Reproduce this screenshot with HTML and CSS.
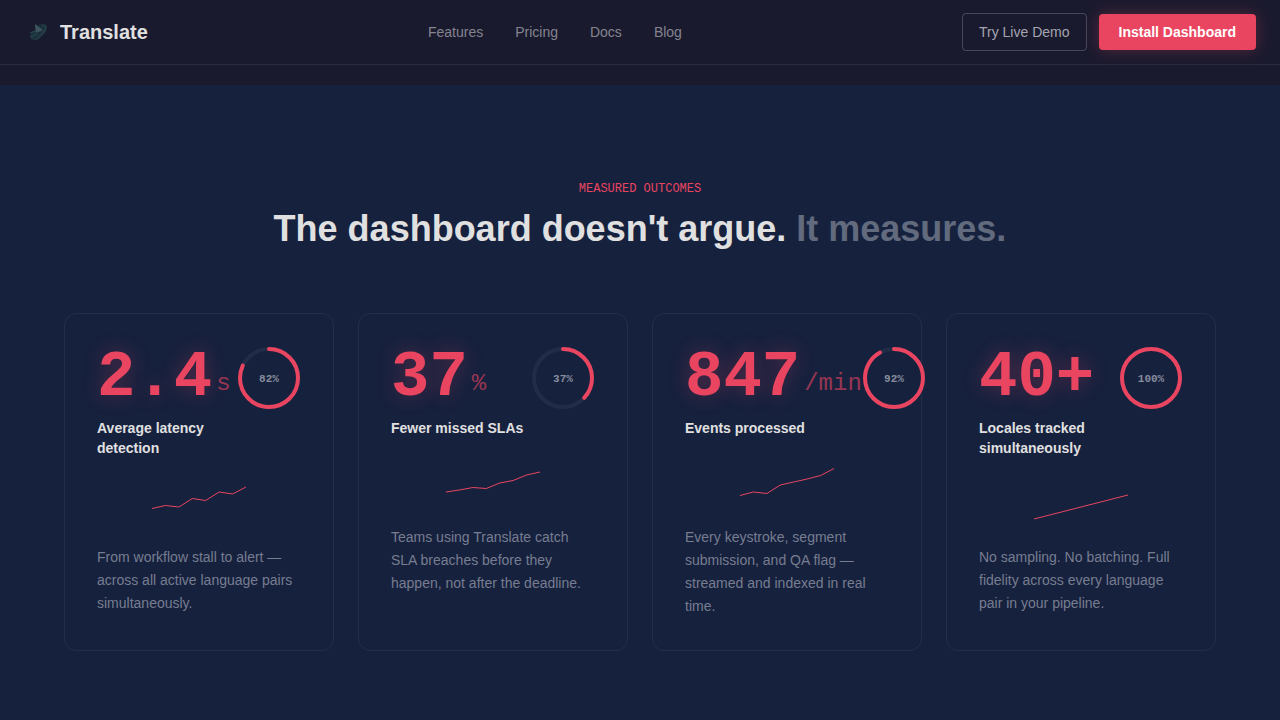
FILE: index.html
```html
<!DOCTYPE html>
<html lang="en">
<head>
    <meta charset="UTF-8">
    <meta name="viewport" content="width=device-width, initial-scale=1">
    <title>Translate</title>
    <link rel="stylesheet" href="styles.css">
</head>
<body>
<header class="site-header">
    <a class="logo" href="#">
        <svg class="logo-mark" viewBox="0 0 28 28" aria-hidden="true">
            <path d="M6 19 C6 16 8 14 11 12 L11 6 L16 9 C19 6 23 6 23 9 C23 14 19 17 15 20 C12 23 8 23 6 19Z" fill="#1e343e"/>
            <path d="M11 6 L20 13 L12 14Z" fill="#3f555e"/>
            <path d="M6 15 L11 13 L15 18 M14 9 C17 6 22 6 22 9 C22 13 17 19 12 22 M7 19 L12 17" fill="none" stroke="#26484b" stroke-width="1"/>
            <path d="M14 17 L20 10 M10 20 L15 16" fill="none" stroke="#172936" stroke-width="1"/>
        </svg>
        <span>Translate</span>
    </a>
    <nav class="nav-links">
        <a href="#features">Features</a>
        <a href="#pricing">Pricing</a>
        <a href="#docs">Docs</a>
        <a href="#blog">Blog</a>
    </nav>
    <div class="nav-actions">
        <button class="btn btn-ghost" type="button">Try Live Demo</button>
        <button class="btn btn-primary" type="button">Install Dashboard</button>
    </div>
</header>

<main>
    <section class="outcomes">
        <p class="eyebrow">MEASURED OUTCOMES</p>
        <h2>The dashboard doesn't argue. <span class="muted">It measures.</span></h2>

        <div class="stats-grid">
            <article class="stat-card">
                <div class="stat-head">
                    <div class="stat-info">
                        <div class="stat-value"><span class="number">2.4</span><span class="unit">s</span></div>
                        <h3>Average latency detection</h3>
                    </div>
                    <svg class="ring" viewBox="0 0 64 64">
                        <circle class="ring-track" cx="32" cy="32" r="29"/>
                        <circle class="ring-fill" cx="32" cy="32" r="29" pathLength="100" stroke-dasharray="82 100" transform="rotate(-90 32 32)"/>
                        <text x="32" y="36">82%</text>
                    </svg>
                </div>
                <svg class="sparkline" viewBox="0 0 94 40" aria-hidden="true">
                    <polyline points="0,26.5 13.4,23.5 26.9,25 40.3,16.5 53.7,18.5 67.1,10 80.6,12 94,5"/>
                </svg>
                <p>From workflow stall to alert — across all active language pairs simultaneously.</p>
            </article>

            <article class="stat-card">
                <div class="stat-head">
                    <div class="stat-info">
                        <div class="stat-value"><span class="number">37</span><span class="unit">%</span></div>
                        <h3>Fewer missed SLAs</h3>
                    </div>
                    <svg class="ring" viewBox="0 0 64 64">
                        <circle class="ring-track" cx="32" cy="32" r="29"/>
                        <circle class="ring-fill" cx="32" cy="32" r="29" pathLength="100" stroke-dasharray="37 100" transform="rotate(-90 32 32)"/>
                        <text x="32" y="36">37%</text>
                    </svg>
                </div>
                <svg class="sparkline" viewBox="0 0 94 40" aria-hidden="true">
                    <polyline points="0,30 13.4,28 26.9,25.5 40.3,26.5 53.7,21 67.1,18.5 80.6,13 94,10"/>
                </svg>
                <p>Teams using Translate catch SLA breaches before they happen, not after the deadline.</p>
            </article>

            <article class="stat-card">
                <div class="stat-head">
                    <div class="stat-info">
                        <div class="stat-value"><span class="number">847</span><span class="unit">/min</span></div>
                        <h3>Events processed</h3>
                    </div>
                    <svg class="ring" viewBox="0 0 64 64">
                        <circle class="ring-track" cx="32" cy="32" r="29"/>
                        <circle class="ring-fill" cx="32" cy="32" r="29" pathLength="100" stroke-dasharray="92 100" transform="rotate(-90 32 32)"/>
                        <text x="32" y="36">92%</text>
                    </svg>
                </div>
                <svg class="sparkline" viewBox="0 0 94 40" aria-hidden="true">
                    <polyline points="0,33.5 13.4,30 26.9,31.5 40.3,23 53.7,20 67.1,17 80.6,13.5 94,6.5"/>
                </svg>
                <p>Every keystroke, segment submission, and QA flag — streamed and indexed in real time.</p>
            </article>

            <article class="stat-card">
                <div class="stat-head">
                    <div class="stat-info">
                        <div class="stat-value"><span class="number">40+</span></div>
                        <h3>Locales tracked simultaneously</h3>
                    </div>
                    <svg class="ring" viewBox="0 0 64 64">
                        <circle class="ring-track" cx="32" cy="32" r="29"/>
                        <circle class="ring-fill" cx="32" cy="32" r="29" pathLength="100" stroke-dasharray="100 100" transform="rotate(-90 32 32)"/>
                        <text x="32" y="36">100%</text>
                    </svg>
                </div>
                <svg class="sparkline" viewBox="0 0 94 40" aria-hidden="true">
                    <polyline points="0,37 94,13"/>
                </svg>
                <p>No sampling. No batching. Full fidelity across every language pair in your pipeline.</p>
            </article>
        </div>
    </section>
</main>
</body>
</html>
```
FILE: styles.css
```css
:root {
    --bg: #1a1a2e;
    --panel: #16213e;
    --accent: #e94560;
    --text: #e0e0e0;
    --mono: "Liberation Mono", monospace;
}

* {
    margin: 0;
    padding: 0;
    box-sizing: border-box;
}

body {
    background: var(--bg);
    color: var(--text);
    font-family: "Liberation Sans", Arial, sans-serif;
    font-size: 14px;
    overflow-x: hidden;
}

/* Hide the scrollbar, the page still scrolls */
html {
    scrollbar-width: none;
}

a {
    color: inherit;
    text-decoration: none;
}

/* Header */
.site-header {
    position: sticky;
    top: 0;
    z-index: 10;
    display: flex;
    align-items: center;
    justify-content: space-between;
    height: 65px;
    padding: 0 24px;
    background: var(--bg);
    border-bottom: 1px solid rgba(255, 255, 255, 0.08);
}

.logo {
    display: flex;
    align-items: center;
    gap: 8px;
    font-size: 20px;
    font-weight: 700;
}

.logo-mark {
    width: 28px;
    height: 28px;
}

.nav-links {
    display: flex;
    gap: 32px;
    color: #84848f;
}

.nav-links a:hover {
    color: var(--text);
}

.nav-actions {
    display: flex;
    align-items: center;
    gap: 12px;
}

.btn {
    border: none;
    border-radius: 4px;
    font-family: inherit;
    font-size: 14px;
    line-height: 20px;
    cursor: pointer;
}

.btn-ghost {
    padding: 8px 16px;
    border: 1px solid rgba(255, 255, 255, 0.2);
    background: transparent;
    color: #a5a5b0;
}

.btn-primary {
    padding: 8px 20px;
    background: var(--accent);
    color: #fff;
    font-weight: 700;
    box-shadow: 0 0 16px rgba(233, 69, 96, 0.3);
}

/* Outcomes */
.outcomes {
    margin-top: 20px;
    padding: 96px 64px;
    background: var(--panel);
    text-align: center;
}

.eyebrow {
    margin-bottom: 12px;
    color: var(--accent);
    font-family: var(--mono);
    font-size: 12px;
    line-height: 16px;
}

h2 {
    margin-bottom: 64px;
    font-size: 36px;
    line-height: 40px;
}

.muted {
    color: #626a7e;
}

.stats-grid {
    display: grid;
    grid-template-columns: repeat(4, minmax(0, 1fr));
    gap: 24px;
    max-width: 1280px;
    margin: 0 auto;
    text-align: left;
}

.stat-card {
    padding: 32px;
    border: 1px solid rgba(255, 255, 255, 0.06);
    border-radius: 12px;
}

.stat-head {
    display: flex;
    align-items: flex-start;
    justify-content: space-between;
    margin-bottom: 24px;
}

.stat-value {
    display: flex;
    align-items: flex-end;
    gap: 4px;
    margin-bottom: 8px;
    color: var(--accent);
    font-family: var(--mono);
}

.number {
    font-size: 64px;
    font-weight: 700;
    line-height: 64px;
    text-shadow: 0 0 20px rgba(233, 69, 96, 0.3);
}

.unit {
    padding-bottom: 12px;
    font-size: 24px;
    line-height: 28px;
    opacity: 0.6;
}

h3 {
    font-size: 14px;
    line-height: 20px;
}

.ring {
    flex-shrink: 0;
    width: 64px;
    height: 64px;
}

.ring circle {
    fill: none;
    stroke-width: 4;
}

.ring .ring-track {
    stroke: rgba(255, 255, 255, 0.05);
}

.ring .ring-fill {
    stroke: var(--accent);
    stroke-linecap: round;
}

.ring text {
    fill: #868c9b;
    font-family: var(--mono);
    font-size: 11px;
    font-weight: 700;
    text-anchor: middle;
}

.sparkline {
    display: block;
    width: 100%;
    height: 40px;
    margin-bottom: 24px;
}

.sparkline polyline {
    fill: none;
    stroke: var(--accent);
    stroke-width: 1;
}

.stat-card p {
    color: #777d90;
    line-height: 23px;
}

@media (max-width: 1000px) {
    .nav-links {
        display: none;
    }

    .stats-grid {
        grid-template-columns: repeat(2, minmax(0, 1fr));
    }
}
```
